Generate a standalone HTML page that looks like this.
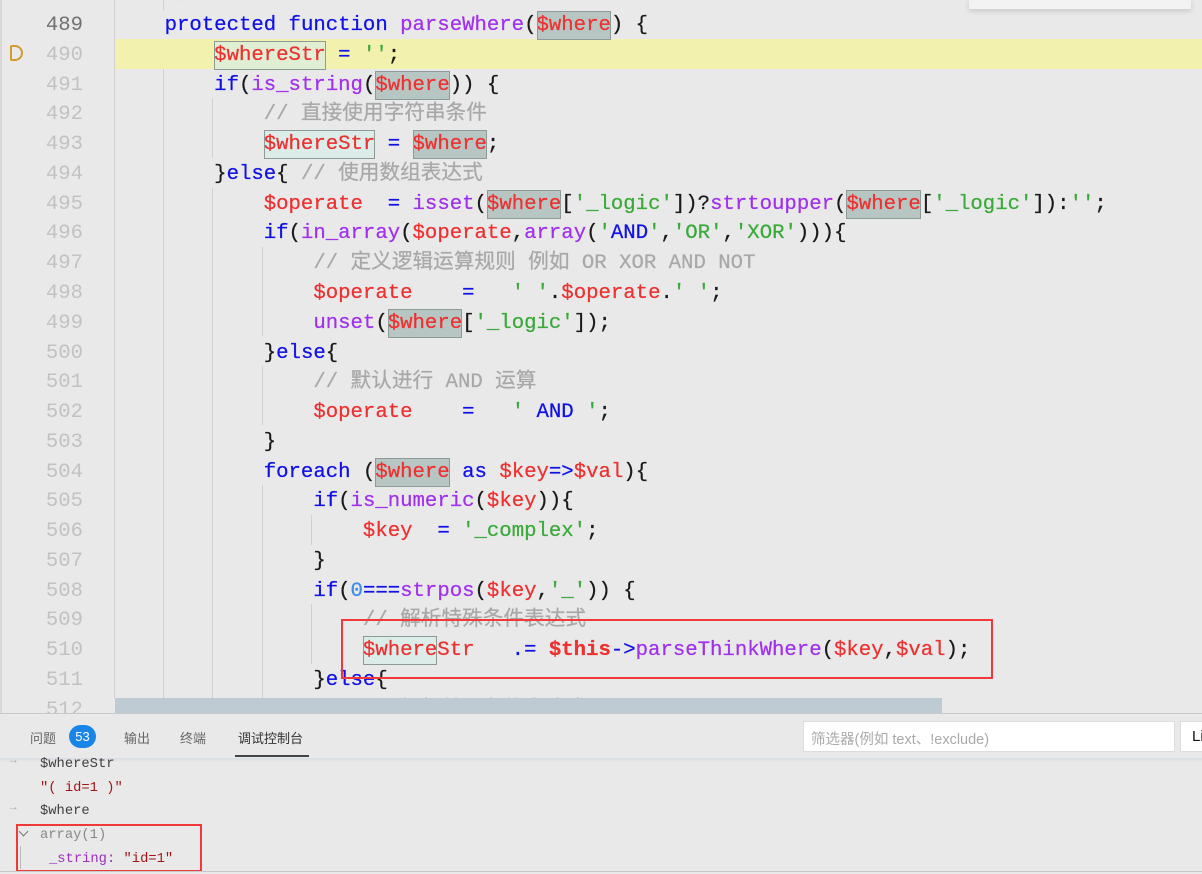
<!DOCTYPE html>
<html><head><meta charset="utf-8">
<style>
*{margin:0;padding:0;box-sizing:border-box}
body{width:1202px;height:874px;overflow:hidden;background:#e9e9e9;position:relative;font-family:"Liberation Mono","Noto Sans CJK SC",monospace}
.ln{position:absolute;left:30px;width:53px;text-align:right;font-size:20.6px;color:#c2c2c2;line-height:29.77px;white-space:pre;transform:translateY(2px)}
.cl{position:absolute;left:115px;font-size:20.67px;line-height:29.77px;white-space:pre;color:#1a1a1a;transform:translateY(2px);-webkit-text-stroke:0.25px currentColor}
.k{color:#1010e8}.f{color:#a030ee}.v{color:#ee3030}.s{color:#3aaa3a}.c{color:#a8a8a8}.n{color:#3a8ee8}
.h{background:#b8c6c3;outline:1.5px solid #8c9a98;outline-offset:-1px;padding:3px 0}
.hs{background:#dcece8;outline:1.5px solid #8c9a98;outline-offset:-1px;padding:3px 0}
.g{position:absolute;width:1px;background:#d0d0d0}
.rb{position:absolute;border:2px solid #f03a3a}
.pn{font-family:"Liberation Mono",monospace;position:absolute;left:40px;font-size:13.8px;line-height:23.7px;white-space:pre;color:#404040;transform:translateY(2px)}
.tab{position:absolute;top:728px;font-family:"Liberation Sans","Noto Sans CJK SC",sans-serif;font-size:13px;color:#666}
</style></head><body>
<div style="position:absolute;left:0;top:0;width:2px;height:713px;background:#d8d8d8"></div>
<div style="position:absolute;left:969px;top:0;width:222px;height:9px;background:#f3f3f3;box-shadow:0 2px 6px rgba(0,0,0,.15)"></div>
<div style="position:absolute;left:115px;top:39px;width:1087px;height:30px;background:#f2f2ae"></div>
<div style="position:absolute;left:10px;top:45px;width:13px;height:16px;border:2px solid #d49a2a;border-radius:2px 8px 8px 2px"></div>
<div class="g" style="left:114px;top:0;height:698px"></div>
<div class="g" style="left:163px;top:0;height:10px"></div>
<div class="g" style="left:163px;top:69px;height:629px"></div>
<div class="g" style="left:212px;top:98px;height:60px"></div>
<div class="g" style="left:212px;top:188px;height:510px"></div>
<div class="g" style="left:262px;top:247px;height:89px"></div>
<div class="g" style="left:262px;top:366px;height:59px"></div>
<div class="g" style="left:262px;top:485px;height:213px"></div>
<div class="g" style="left:311px;top:515px;height:30px"></div>
<div class="g" style="left:311px;top:604px;height:60px"></div>

<div class="ln" style="top:-21px">488</div>
<div class="ln" style="top:9px;color:#707070">489</div>
<div class="ln" style="top:38.8px">490</div>
<div class="ln" style="top:68.5px">491</div>
<div class="ln" style="top:98.3px">492</div>
<div class="ln" style="top:128.1px">493</div>
<div class="ln" style="top:157.9px">494</div>
<div class="ln" style="top:187.6px">495</div>
<div class="ln" style="top:217.4px">496</div>
<div class="ln" style="top:247.2px">497</div>
<div class="ln" style="top:276.9px">498</div>
<div class="ln" style="top:306.7px">499</div>
<div class="ln" style="top:336.5px">500</div>
<div class="ln" style="top:366.2px">501</div>
<div class="ln" style="top:396px">502</div>
<div class="ln" style="top:425.8px">503</div>
<div class="ln" style="top:455.5px">504</div>
<div class="ln" style="top:485.3px">505</div>
<div class="ln" style="top:515.1px">506</div>
<div class="ln" style="top:544.8px">507</div>
<div class="ln" style="top:574.6px">508</div>
<div class="ln" style="top:604.4px">509</div>
<div class="ln" style="top:634.1px">510</div>
<div class="ln" style="top:663.9px">511</div>
<div class="ln" style="top:693.7px">512</div>

<div class="cl" style="top:-21px"><span class="c">    */</span></div>
<div class="cl" style="top:9px">    <span class="k">protected function</span> <span class="f">parseWhere</span>(<span class="v h">$where</span>) {</div>
<div class="cl" style="top:38.8px">        <span class="v hs" style="background:#e0eed4">$whereStr</span> <span class="k">=</span> <span class="s">''</span>;</div>
<div class="cl" style="top:68.5px">        <span class="k">if</span>(<span class="f">is_string</span>(<span class="v h">$where</span>)) {</div>
<div class="cl" style="top:98.3px">            <span class="c">// 直接使用字符串条件</span></div>
<div class="cl" style="top:128.1px">            <span class="v hs">$whereStr</span> <span class="k">=</span> <span class="v h">$where</span>;</div>
<div class="cl" style="top:157.9px">        }<span class="k">else</span>{ <span class="c">// 使用数组表达式</span></div>
<div class="cl" style="top:187.6px">            <span class="v">$operate</span>  <span class="k">=</span> <span class="f">isset</span>(<span class="v h">$where</span>[<span class="s">'_logic'</span>])?<span class="f">strtoupper</span>(<span class="v h">$where</span>[<span class="s">'_logic'</span>]):<span class="s">''</span>;</div>
<div class="cl" style="top:217.4px">            <span class="k">if</span>(<span class="f">in_array</span>(<span class="v">$operate</span>,<span class="f">array</span>(<span class="s">'</span><span class="k">AND</span><span class="s">'</span>,<span class="s">'OR'</span>,<span class="s">'XOR'</span>))){</div>
<div class="cl" style="top:247.2px">                <span class="c">// 定义逻辑运算规则 例如 OR XOR AND NOT</span></div>
<div class="cl" style="top:276.9px">                <span class="v">$operate</span>    <span class="k">=</span>   <span class="s">' '</span>.<span class="v">$operate</span>.<span class="s">' '</span>;</div>
<div class="cl" style="top:306.7px">                <span class="f">unset</span>(<span class="v h">$where</span>[<span class="s">'_logic'</span>]);</div>
<div class="cl" style="top:336.5px">            }<span class="k">else</span>{</div>
<div class="cl" style="top:366.2px">                <span class="c">// 默认进行 AND 运算</span></div>
<div class="cl" style="top:396px">                <span class="v">$operate</span>    <span class="k">=</span>   <span class="s">' </span><span class="k">AND</span><span class="s"> '</span>;</div>
<div class="cl" style="top:425.8px">            }</div>
<div class="cl" style="top:455.5px">            <span class="k">foreach</span> (<span class="v h">$where</span> <span class="k">as</span> <span class="v">$key</span><span class="k">=&gt;</span><span class="v">$val</span>){</div>
<div class="cl" style="top:485.3px">                <span class="k">if</span>(<span class="f">is_numeric</span>(<span class="v">$key</span>)){</div>
<div class="cl" style="top:515.1px">                    <span class="v">$key</span>  <span class="k">=</span> <span class="s">'_complex'</span>;</div>
<div class="cl" style="top:544.8px">                }</div>
<div class="cl" style="top:574.6px">                <span class="k">if</span>(<span class="n">0</span><span class="k">===</span><span class="f">strpos</span>(<span class="v">$key</span>,<span class="s">'_'</span>)) {</div>
<div class="cl" style="top:604.4px">                    <span class="c">// 解析特殊条件表达式</span></div>
<div class="cl" style="top:634.1px">                    <span class="v hs">$where</span><span class="v">Str</span>   <span class="k">.=</span> <b class="v">$this</b><span class="k">-&gt;</span><span class="f">parseThinkWhere</span>(<span class="v">$key</span>,<span class="v">$val</span>);</div>
<div class="cl" style="top:663.9px">                }<span class="k">else</span>{</div>
<div class="cl" style="top:693.7px">                    <span class="c">// 解析普通条件表达式</span></div>

<div class="rb" style="left:341px;top:619px;width:652px;height:60px"></div>

<div style="position:absolute;left:115px;top:698px;width:827px;height:15px;background:#bfcbd3"></div>
<div style="position:absolute;left:0;top:713px;width:1202px;height:161px;background:#e9e9e9;border-top:1px solid #c8c8c8"></div>
<div style="position:absolute;left:0;top:758px;width:1202px;height:4px;background:linear-gradient(#d8dde2,#e9e9e9)"></div>
<div class="tab" style="left:30px">问题</div>
<div style="position:absolute;left:69px;top:725px;width:27px;height:23px;border-radius:12px;background:#1a85e8;color:#fff;font:13px 'Liberation Sans',sans-serif;text-align:center;line-height:23px">53</div>
<div class="tab" style="left:124px">输出</div>
<div class="tab" style="left:180px">终端</div>
<div class="tab" style="left:238px;color:#333">调试控制台</div>
<div style="position:absolute;left:235px;top:755px;width:74px;height:1.5px;background:#444"></div>
<div style="position:absolute;left:803px;top:721px;width:372px;height:31px;background:#fff;border:1px solid #ddd;font:14.5px 'Liberation Sans','Noto Sans CJK SC',sans-serif;color:#aaa;padding:6px 7px">筛选器(例如 text、!exclude)</div>
<div style="position:absolute;left:1180px;top:721px;width:30px;height:31px;background:#fff;border:1px solid #ddd;font:15px 'Liberation Sans',sans-serif;color:#111;padding:6px 11px">Li</div>

<div style="position:absolute;left:10px;top:755px;font-size:11px;color:#aaa">→</div>
<div style="position:absolute;left:10px;top:802px;font-size:11px;color:#aaa">→</div>
<div class="pn" style="top:751px">$whereStr</div>
<div class="pn" style="top:775px;color:#a31515">"( id=1 )"</div>
<div class="pn" style="top:798px">$where</div>
<div class="pn" style="top:822px;color:#888">array(1)</div>
<div style="position:absolute;left:20px;top:828px;width:7px;height:7px;border-right:1.3px solid #777;border-bottom:1.3px solid #777;transform:rotate(45deg)"></div>
<div style="position:absolute;left:20px;top:846px;width:1px;height:23px;background:#bbb"></div>
<div class="pn" style="top:846px;left:49px"><span style="color:#9b30c0">_string:</span> <span style="color:#a31515">"id=1"</span></div>
<div class="rb" style="left:16px;top:824px;width:186px;height:48px"></div>
<div style="position:absolute;left:0;top:871px;width:1202px;height:1px;background:#c8c8c8"></div>
</body></html>
